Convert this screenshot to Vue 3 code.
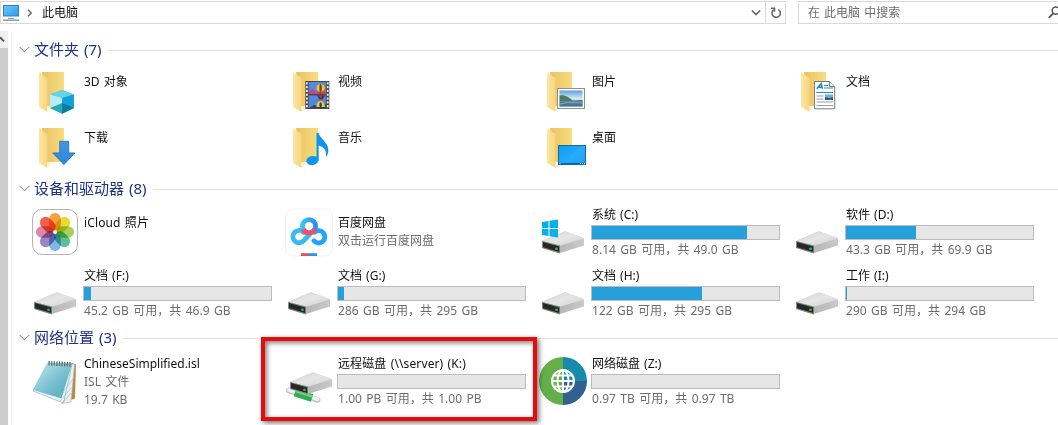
<script setup>
const folders = [
  { name: '3D 对象', icon: 'cube' },
  { name: '视频', icon: 'video' },
  { name: '图片', icon: 'picture' },
  { name: '文档', icon: 'doc' },
  { name: '下载', icon: 'down' },
  { name: '音乐', icon: 'music' },
  { name: '桌面', icon: 'desktop' },
]
const devices = [
  { name: 'iCloud 照片', icon: 'photos', wide: true },
  { name: '百度网盘', icon: 'baidu', lines: ['双击运行百度网盘'] },
  { name: '系统 (C:)', icon: 'system', used: 83, free: '8.14 GB 可用，共 49.0 GB' },
  { name: '软件 (D:)', icon: 'drive', used: 37.5, free: '43.3 GB 可用，共 69.9 GB' },
  { name: '文档 (F:)', icon: 'drive', used: 4, free: '45.2 GB 可用，共 46.9 GB' },
  { name: '文档 (G:)', icon: 'drive', used: 3, free: '286 GB 可用，共 295 GB' },
  { name: '文档 (H:)', icon: 'drive', used: 59, free: '122 GB 可用，共 295 GB' },
  { name: '工作 (I:)', icon: 'drive', used: 0.8, free: '290 GB 可用，共 294 GB' },
]
const network = [
  { name: 'ChineseSimplified.isl', icon: 'notepad', lines: ['ISL 文件', '19.7 KB'] },
  { name: '远程磁盘 (\\\\server) (K:)', icon: 'netdrive', wide: true, used: 0, free: '1.00 PB 可用，共 1.00 PB' },
  { name: '网络磁盘 (Z:)', icon: 'globe', used: 0, free: '0.97 TB 可用，共 0.97 TB' },
]
const sections = [
  { title: '文件夹 (7)', kind: 'folders', items: folders },
  { title: '设备和驱动器 (8)', kind: 'drives', items: devices },
  { title: '网络位置 (3)', kind: 'drives', items: network },
]
const petals = ['#f9a03f', '#e6dc2e', '#a9cf5a', '#5fbf9b', '#7fb6e6', '#9a86c4', '#dd86a8', '#f0604c']
const holes = [0, 1, 2, 3, 4, 5, 6]
</script>

<template>
  <div class="window">
    <svg class="defs" width="0" height="0">
      <defs>
        <linearGradient id="gFront" x1="0" x2="1"><stop offset="0" stop-color="#fbe6a2" /><stop offset="1" stop-color="#f8d57c" /></linearGradient>
        <linearGradient id="gBack" x1="0" x2="1"><stop offset="0" stop-color="#e9c263" /><stop offset="1" stop-color="#f8dc80" /></linearGradient>
        <linearGradient id="gScreen" x1="0" y1="0" x2="1" y2="1"><stop offset="0" stop-color="#6cc8fa" /><stop offset="1" stop-color="#2a9cee" /></linearGradient>
        <linearGradient id="gTop" x1="0" y1="0" x2="1" y2="1"><stop offset="0" stop-color="#d2d2d4" /><stop offset=".5" stop-color="#e6e6e7" /><stop offset="1" stop-color="#cfcfd1" /></linearGradient>
        <linearGradient id="gSide" x1="0" x2="1"><stop offset="0" stop-color="#a9a9ac" /><stop offset="1" stop-color="#c9c9cb" /></linearGradient>
        <linearGradient id="gSky" x1="0" y1="0" x2="0" y2="1"><stop offset="0" stop-color="#5f9fe0" /><stop offset=".5" stop-color="#d3e9f6" /><stop offset="1" stop-color="#6e9fc4" /></linearGradient>
        <linearGradient id="gDesk" x1="0" y1="0" x2="1" y2="1"><stop offset="0" stop-color="#0d9cf0" /><stop offset=".5" stop-color="#22a9fb" /><stop offset="1" stop-color="#1095ee" /></linearGradient>
        <linearGradient id="gNote" x1="0" y1="0" x2="1" y2="1"><stop offset="0" stop-color="#c3e8ef" /><stop offset=".55" stop-color="#77bfd0" /><stop offset="1" stop-color="#4da6bb" /></linearGradient>
        <linearGradient id="gBdL" x1="0" x2="1"><stop offset="0" stop-color="#35c6f4" /><stop offset="1" stop-color="#2a8ff5" /></linearGradient>
        <linearGradient id="gDown" x1="0" y1="0" x2="0" y2="1"><stop offset="0" stop-color="#3f97e4" /><stop offset="1" stop-color="#2d86dc" /></linearGradient>
      </defs>
    </svg>

    <header class="toolbar">
      <div class="address">
        <svg class="pc" width="18" height="18" viewBox="0 0 18 18">
          <rect x="1.5" y="1.5" width="15" height="10.5" fill="url(#gScreen)" stroke="#3c7fae" />
          <path d="M6 14.4h6" stroke="#7e99aa" stroke-width="1" />
          <path d="M1 16.2h16" stroke="#8196a5" stroke-width="1.4" />
        </svg>
        <svg class="crumb" width="6" height="8" viewBox="0 0 6 8"><path d="M1 .8L4.200 4 1 7.200" fill="none" stroke="#666" stroke-width="1.400" /></svg>
        <span class="path">此电脑</span>
        <svg class="drop" width="10" height="8" viewBox="0 0 10 8"><path d="M.9 1.500L5 5.600l4.100-4.100" fill="none" stroke="#666" stroke-width="1.700" /></svg>
        <div class="refresh">
          <svg width="12" height="12" viewBox="0 0 12 12"><path d="M8.400 2.600A4.200 4.200 0 1 1 3.600 2.900M1 1.200h3.500V4.800" fill="none" stroke="#666" stroke-width="1.600" /></svg>
        </div>
      </div>
      <div class="search">
        <span>在 此电脑 中搜索</span>
        <svg width="12" height="13" viewBox="0 0 12 13"><circle cx="7.800" cy="4.600" r="3.600" fill="none" stroke="#555" stroke-width="1.500" /><path d="M5.200 7.300L.8 11.800" stroke="#555" stroke-width="1.900" /></svg>
      </div>
    </header>

    <div class="body">
      <div class="scroll">
        <div class="up"><svg width="5" height="7" viewBox="0 0 5 7"><path d="M0 1.200L4 5.400" stroke="#505050" stroke-width="1.800" /></svg></div>
      </div>
      <main>
        <section v-for="s in sections" :key="s.title" :class="s.kind">
          <h2>
            <svg width="11" height="7" viewBox="0 0 11 7"><path d="M.5 .8l5 5 5-5" fill="none" stroke="#777" /></svg>
            <span>{{ s.title }}</span>
            <i></i>
          </h2>
          <div class="grid">
            <div v-for="t in s.items" :key="t.name" class="tile">
              <svg class="icon" width="48" height="48" viewBox="0 0 48 48">
                <g v-if="s.kind === 'folders'">
                  <path d="M10 4h22v34H14z" fill="url(#gBack)" />
                  <path d="M7 4.200l8.500 6.100v33.500L7 39z" fill="url(#gFront)" />
                  <path d="M15.500 38h3v4l-3 1.600z" fill="#fdf3cf" />
                </g>
                <g v-if="t.icon === 'cube'">
                  <path d="M18 26.600L30.200 22 42 26.600V40L30.200 45.700 18 40z" fill="#2cc0dc" />
                  <path d="M18 26.600L30.200 22 42 26.600 30.200 30z" fill="#62d4e6" />
                  <path d="M18 26.600L30.200 30v9L18 40z" fill="#b4edf4" />
                  <path d="M42 26.600L30.200 30v9L42 40z" fill="#12a1da" />
                  <path d="M18 40l12.200-5v10.700z" fill="#2aa6b4" /><path d="M42 40l-11.800-5v10.700z" fill="#087d9b" />
                </g>
                <g v-if="t.icon === 'video'">
                  <rect x="19.300" y="13" width="24" height="28" fill="#4a4a4a" />
                  <rect x="22.700" y="14" width="17.200" height="12" fill="#5588e2" />
                  <rect x="22.700" y="27.500" width="17.200" height="12.500" fill="#5288e0" />
                  <path d="M22.700 23l4-2 4 3 9-2v4H22.700z" fill="#bb4a80" />
                  <path d="M23 40l5-3 6 1 6-2v4z" fill="#30446f" />
                  <ellipse cx="34.600" cy="20" rx="4.300" ry="4" fill="#f1c51d" /><ellipse cx="34.600" cy="20" rx="1.200" ry="4" fill="#6c4818" />
                  <path d="M32.500 23.500h4.400l-1 2.800h-2.400z" fill="#d43328" />
                  <path d="M31 27.500h8l-2.500 4h-3z" fill="#4d2d39" /><path d="M33 28h3l-1 2.500z" fill="#d83a36" />
                  <path d="M30.400 39c0-8 8.400-8 8.400 0z" fill="#efcc2b" /><ellipse cx="34.600" cy="37" rx="1.200" ry="2.800" fill="#373421" />
                  <g fill="#eee"><template v-for="h in holes" :key="h"><rect x="20" :y="14.300 + h * 3.800" width="1.800" height="2.100" /><rect x="40.800" :y="14.300 + h * 3.800" width="1.800" height="2.100" /></template></g>
                </g>
                <g v-if="t.icon === 'picture'">
                  <rect x="17.500" y="20.500" width="27" height="20" fill="#fff" stroke="#8c9093" />
                  <rect x="19.500" y="22.500" width="23" height="16" fill="url(#gSky)" />
                  <path d="M19.500 27.500c5-1 10 2 13 5l10-.5v1.800h-23z" fill="#4e7a5d" />
                  <path d="M19.500 33.800h23v4.700h-23z" fill="#47789b" /><path d="M19.500 36l9-1.500 14 .5" fill="none" stroke="#80a9c4" />
                </g>
                <g v-if="t.icon === 'doc'">
                  <path d="M20.500 13.500h15l5.200 5v22.300H20.500z" fill="#fdfefe" stroke="#7b7b7b" />
                  <path d="M35.500 13.500v5h5" fill="#eee" stroke="#7b7b7b" />
                  <path d="M22.800 20.800l4.400-5.100 1.200 5.100M24.200 19.200h3.800" fill="none" stroke="#168bd0" stroke-width="1.500" />
                  <path d="M30 17.500h4M30 20h9M22.300 24.500h16.700" stroke="#2390d2" stroke-width="1.200" />
                  <path d="M22.500 28h7M22.500 31h7M22.500 34h16.500M22.500 37.500h16.500" stroke="#8fa0ac" />
                  <rect x="31" y="26.500" width="8" height="5.500" fill="#7caed4" /><path d="M31 29l4 1 4-1v3h-8z" fill="#345f79" />
                </g>
                <path v-if="t.icon === 'down'" d="M27.700 17.300h9v11.600h6.200L31.900 40.600 20.700 28.900h7z" fill="url(#gDown)" stroke="#1c6db7" stroke-width=".8" />
                <g v-if="t.icon === 'music'" fill="#0c96ec">
                  <ellipse cx="26.400" cy="36.500" rx="6.100" ry="4.500" transform="rotate(-10 26.400 36.500)" />
                  <path d="M30.500 9h2.200c.5 5.500 9.700 8.600 9.700 17.500 0 2.500-1 5-2.700 6.500 1.600-6.500-1.800-10-7-11.500V36.500h-2.200z" />
                </g>
                <g v-if="t.icon === 'desktop'">
                  <rect x="18.500" y="21.500" width="27" height="19" fill="url(#gDesk)" stroke="#13689e" />
                  <path d="M25 38L41 22h4v16z" fill="#3bb4fc" opacity=".35" />
                  <path d="M19 39h26v1.500H19z" fill="#086bb0" /><path d="M19.500 39.700h1M40 39.700h1M42 39.700h1M44 39.700h1" stroke="#fff" />
                </g>
                <g v-if="t.icon === 'photos'">
                  <rect x=".5" y="1.500" width="45" height="45" rx="9.500" fill="#fff" stroke="#b5b5b5" />
                  <g class="petals"><rect v-for="(c, i) in petals" :key="c" x="17.200" y="5" width="11.600" height="17.500" rx="5.800" :fill="c" :transform="`rotate(${i * 45} 23 24)`" /></g>
                  <circle cx="23" cy="24" r="1.500" fill="#fff" />
                </g>
                <g v-if="t.icon === 'baidu'">
                  <rect x="-.5" y="1" width="47" height="47" rx="8" fill="#fff" stroke="#f4f4f4" />
                  <g fill="none" stroke-width="4.800" stroke-linecap="round">
                    <path d="M17.500 24.200A6.200 6.200 0 1 0 17.800 32.600L23.500 26.500" stroke="#35bdf4" />
                    <path d="M27.900 32.800A6.200 6.200 0 1 0 28.500 24.200" stroke="#22a4f8" />
                    <circle cx="23" cy="18.200" r="6.600" stroke="url(#gBdL)" />
                    <path d="M17 21a6.600 6.600 0 0 0 12 0" stroke="#ef4e70" stroke-linecap="butt" />
                  </g>
                  <path d="M15 45.200h8V48h-8z" fill="#f04867" /><path d="M23 45.200h8V48h-8z" fill="#2697ee" />
                </g>
                <g v-if="t.icon === 'netdrive'">
                  <path d="M3 33.500L31.500 43" stroke="#c3c8c8" stroke-width="6" stroke-linecap="round" />
                  <path d="M3 33L31.500 42.300" stroke="#eef1f1" stroke-width="3.600" stroke-linecap="round" />
                  <path d="M9 35.400L26 41" stroke="#2fb04e" stroke-width="8" />
                  <path d="M9.500 34L26.200 39.400" stroke="#6fd884" stroke-width="2.400" />
                </g>
                <g v-if="t.icon === 'drive' || t.icon === 'system' || t.icon === 'netdrive'" :transform="t.icon === 'netdrive' ? 'translate(2 -8)' : ''">
                  <path d="M2 33l22-9.300q1-.3 2 0L43 29.800q1 .3 1 1.200v6.500L19 45.300 2 39.800z" fill="url(#gSide)" />
                  <path d="M2 33l22-9.300q1-.3 2 0L43 29.800q1 .5 0 1L20 37.700z" fill="url(#gTop)" />
                  <path d="M2 33l18 4.600v7.800L2 40z" fill="#858588" />
                  <path d="M3 34.100l16.200 4.300v5.500L3 39.200z" fill="#262728" />
                  <ellipse cx="16.500" cy="40.800" rx="1.400" ry="1.300" fill="#20c43c" />
                </g>
                <g v-if="t.icon === 'system'" fill="#05b1ea">
                  <path d="M2 14l6.500-1v7H2zM9.500 12.800L18 11.500V20H9.500zM2 21h6.500v7L2 27zM9.500 21H18v8.500l-8.500-1.300z" />
                </g>
                <g v-if="t.icon === 'notepad'">
                  <path d="M40 6l4 1.500-1 34-8 3z" fill="#b88a46" />
                  <path d="M39 6.500l3.500 1L39 45l-9 1.500z" fill="#e9f0f2" stroke="#abb8bd" stroke-width=".6" />
                  <path d="M15.500 6L40 7 31.500 46 1 34z" fill="#edf8fa" stroke="#7fa2ab" stroke-width=".6" />
                  <path d="M15.500 6L40 7 29.500 41.500 1 33z" fill="url(#gNote)" />
                  <path d="M27 41l14-19M28 44l13-15M39 36l-8 9" stroke="#a8bdc7" stroke-width=".7" />
                  <path d="M16.500 6.300L40 7.300" stroke="#5e696b" stroke-width="4.500" stroke-dasharray="1.300 1.300" />
                </g>
                <g v-if="t.icon === 'globe'">
                  <path d="M23 0a24 24 0 0 0 0 48z" fill="#65af4b" />
                  <path d="M23 0a24 24 0 0 1 24 24H23z" fill="#168cac" />
                  <path d="M47 24a24 24 0 0 1-24 24V24z" fill="#31628f" />
                  <g fill="none" stroke="#fff" stroke-width="2"><circle cx="23" cy="24" r="11" /><ellipse cx="23" cy="24" rx="5.500" ry="11" /><path d="M23 13v22M12 24h22M14 18.500h18M14 29.500h18" /></g>
                </g>
              </svg>
              <div class="info">
                <div class="name" :class="{ wide: t.wide }">{{ t.name }}</div>
                <template v-if="t.free">
                  <div class="bar"><b :style="{ width: t.used + '%' }"></b></div>
                  <div class="sub">{{ t.free }}</div>
                </template>
                <div v-for="l in t.lines" :key="l" class="sub line">{{ l }}</div>
              </div>
            </div>
          </div>
        </section>
      </main>
    </div>
    <div class="highlight"></div>
  </div>
</template>

<style>
body { margin: 0; background: #fff; }
</style>
<style scoped>
.window { position: relative; width: 1058px; height: 425px; overflow: hidden; background: #fff; color: #111; font: 12px/16px "Noto Sans", "Noto Sans CJK SC", sans-serif; word-spacing: 1px; }
.defs { position: absolute; }
.toolbar { display: flex; gap: 12px; height: 31px; padding-top: 1px; box-sizing: border-box; }
.address, .search { display: flex; align-items: center; box-sizing: border-box; height: 23px; border: 1px solid #d9d9d9; }
.address { width: 786px; padding-left: 1px; }
.crumb { margin: 0 9px 0 7px; }
.path { flex: 1; }
.drop { margin-right: 4px; }
.refresh { display: flex; align-items: center; justify-content: center; width: 19px; height: 21px; border-left: 1px solid #d9d9d9; }
.search { flex: 1; justify-content: space-between; padding-left: 9px; border-right: 0; color: #6d6d6d; margin-right: -2px; }
.body { display: flex; height: 394px; }
.scroll { width: 8px; background: #cdcdcd; }
.up { height: 17px; background: #f0f0f0; display: flex; align-items: center; }
main { flex: 1; margin-left: 3px; padding-top: 6px; border-left: 1px solid #f3f3f3; box-sizing: border-box; }
h2 { display: flex; align-items: center; height: 24px; margin: 0; padding-left: 7px; font-size: 15px; font-weight: 400; line-height: 24px; color: #1e3287; }
h2 span { margin: 0 7px 0 4px; }
h2 i { flex: 1; height: 1px; margin-top: 2px; background: #e0e0e0; }
.grid { display: grid; grid-template-columns: repeat(4, 254px); padding-left: 20px; }
.folders .grid { grid-auto-rows: 56px; padding-bottom: 3px; }
.drives .grid { grid-auto-rows: 61px; padding: 2px 0 1px 20px; }
.tile { display: flex; gap: 4px; }
.icon { flex: none; margin-top: 7px; overflow: visible; }
.drives .icon { margin-top: 6px; }
.info { padding-top: 13px; white-space: nowrap; }
.drives .info { padding-top: 5px; }
.name.wide { letter-spacing: .12px; }
.sub { color: #6d6d6d; word-spacing: 1.2px; }
.bar + .sub { letter-spacing: .03px; }
.bar { box-sizing: border-box; width: 189px; height: 15px; margin: 2px 0 2px -1px; border: 1px solid #bcbcbc; background: #e6e6e6; }
.bar b { display: block; height: 13px; background: #26a0da; }
.tile:has(.line) .info, .tile:first-child .wide { line-height: 18px; }
.drives .tile:has(.line) .info { padding-top: 4px; }
.drives:nth-child(2) .tile:nth-child(-n+2) .info { padding-top: 12px; }
.petals rect { mix-blend-mode: multiply; }
.highlight { position: absolute; left: 261px; top: 337px; width: 276px; height: 84px; box-sizing: border-box; border: 4px solid #e80b0b; box-shadow: 2px 2px 5px rgba(0, 0, 0, .55), inset 2px 2px 5px rgba(0, 0, 0, .5); }
</style>
